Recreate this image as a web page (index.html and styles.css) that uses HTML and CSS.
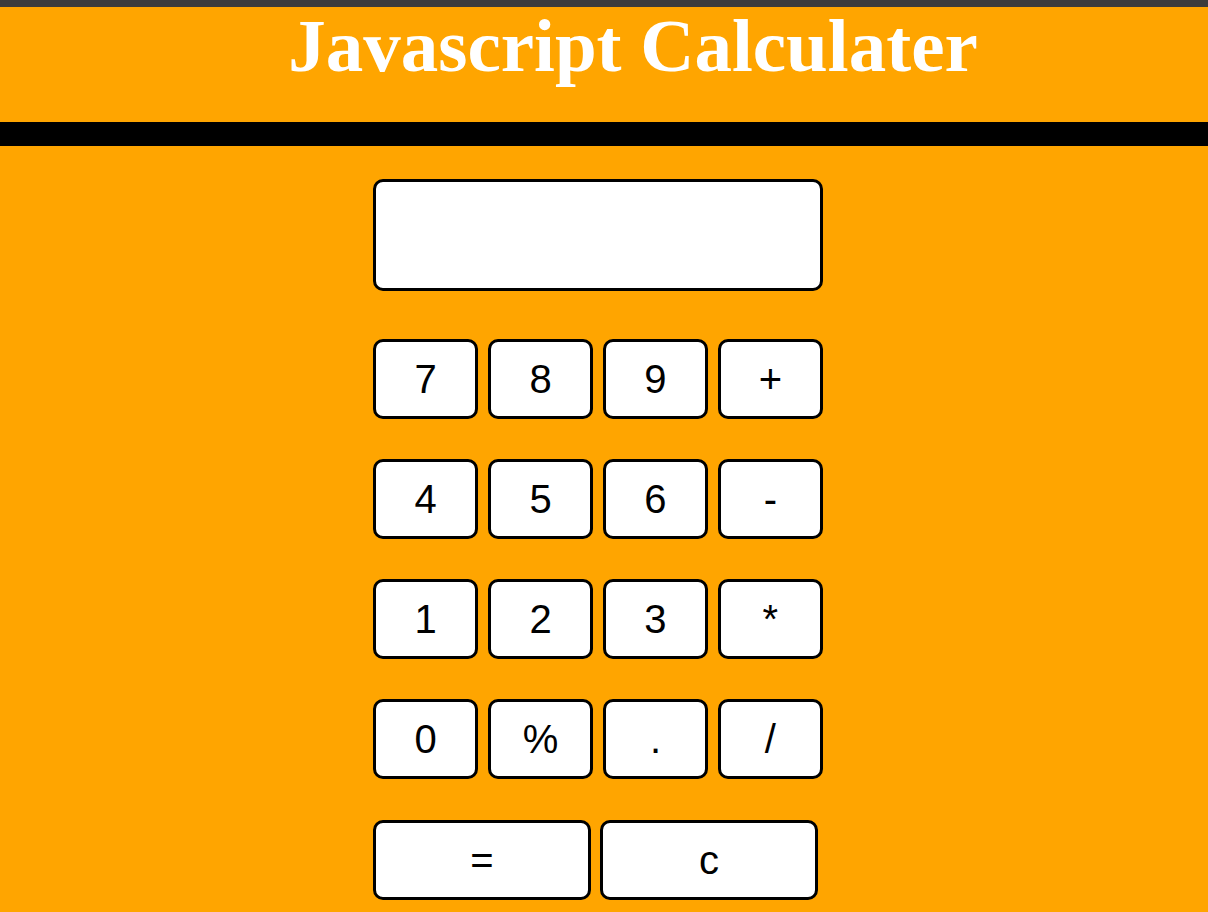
FILE: index.html
```html
<!DOCTYPE html>
<html lang="en">
<head>
<meta charset="utf-8">
<title>Javascript Calculater</title>
<link rel="stylesheet" href="styles.css">
</head>
<body>
<div class="topbar"></div>
<header class="header">
  <h1 class="title">Javascript Calculater</h1>
</header>
<div class="divider"></div>
<main class="main">
  <div class="calc">
    <div class="display"></div>
    <div class="keys">
      <button class="key">7</button>
      <button class="key">8</button>
      <button class="key">9</button>
      <button class="key">+</button>
      <button class="key">4</button>
      <button class="key">5</button>
      <button class="key">6</button>
      <button class="key">-</button>
      <button class="key">1</button>
      <button class="key">2</button>
      <button class="key">3</button>
      <button class="key">*</button>
      <button class="key">0</button>
      <button class="key">%</button>
      <button class="key">.</button>
      <button class="key">/</button>
    </div>
    <div class="bottom-keys">
      <button class="key wide">=</button>
      <button class="key wide">c</button>
    </div>
  </div>
</main>
</body>
</html>
```

FILE: styles.css
```css
html, body {
  margin: 0;
  padding: 0;
}
body {
  background: #ffa500;
  height: 912px;
  overflow: hidden;
  font-family: "Liberation Sans", Arial, sans-serif;
}
.topbar {
  height: 7px;
  background: #3c3c3c;
}
.header {
  height: 115px;
  padding-left: 58px;
  box-sizing: border-box;
}
.title {
  margin: 0;
  padding-top: 1px;
  font-family: "Liberation Serif", "Times New Roman", serif;
  font-weight: bold;
  font-size: 75px;
  line-height: 75px;
  color: #ffffff;
  text-align: center;
}
.divider {
  height: 24px;
  background: #000000;
}
.main {
  display: flex;
  justify-content: center;
  padding-right: 12px;
  padding-top: 33px;
}
.calc {
  width: 450px;
  display: flex;
  flex-direction: column;
}
.display {
  height: 112px;
  box-sizing: border-box;
  background: #ffffff;
  border: 3px solid #000000;
  border-radius: 10px;
}
.keys {
  margin-top: 48px;
  display: grid;
  grid-template-columns: repeat(4, 1fr);
  column-gap: 9.5px;
  row-gap: 40px;
}
.key {
  height: 80px;
  box-sizing: border-box;
  background: #ffffff;
  border: 3px solid #000000;
  border-radius: 10px;
  font-family: "Liberation Sans", Arial, sans-serif;
  font-size: 40px;
  color: #000000;
  padding: 0;
  margin: 0;
}
.bottom-keys {
  margin-top: 41px;
  display: flex;
  gap: 9px;
}
.key.wide {
  width: 218px;
}
```
